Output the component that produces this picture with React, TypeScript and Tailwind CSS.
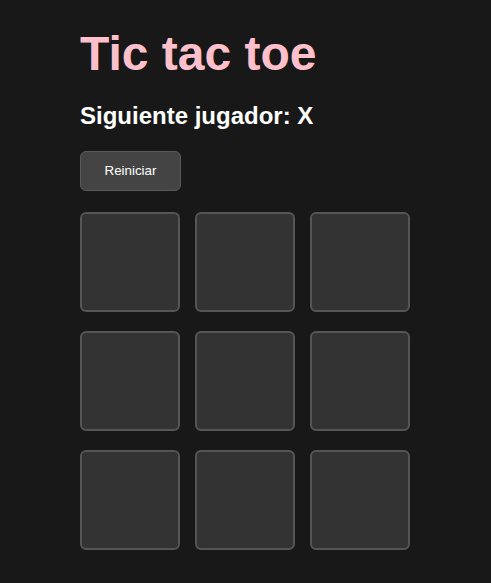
export default function App() {
  const cells = Array.from({ length: 9 }, (_, i) => i)

  return (
    <div className="min-h-screen bg-[#181818] pl-20 pt-[30px] font-['Liberation_Sans',Arial,sans-serif] text-white">
      <h1 className="text-[48px] font-bold leading-[48px] text-[#ffc0cb]">Tic tac toe</h1>
      <h2 className="mt-[26px] text-[24px] font-bold leading-[24px]">Siguiente jugador: X</h2>
      <button className="mt-[23px] h-10 w-[101px] rounded-md border border-[#5a5a5a] bg-[#444444] text-[13.33px] text-white">
        Reiniciar
      </button>
      <div className="mt-[21px] grid w-[330px] grid-cols-[100px_100px_100px] gap-x-[15px] gap-y-[19px]">
        {cells.map((i) => (
          <div key={i} className="h-[100px] w-[100px] rounded-md border-2 border-[#555555] bg-[#333333]" />
        ))}
      </div>
    </div>
  )
}
